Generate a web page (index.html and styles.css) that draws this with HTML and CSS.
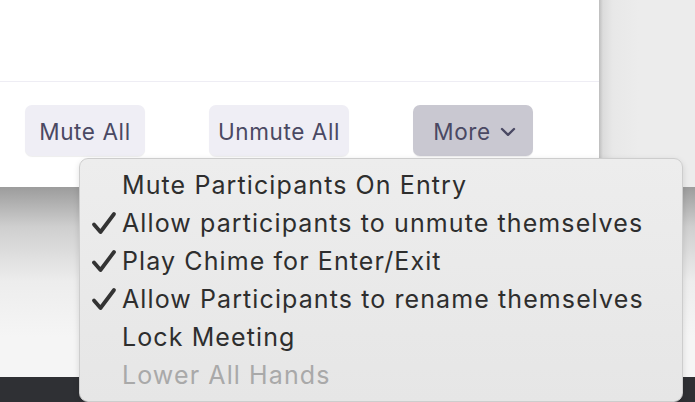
FILE: index.html
```html
<!DOCTYPE html>
<html lang="en">
<head>
    <meta charset="UTF-8">
    <meta name="viewport" content="width=device-width, initial-scale=1.0">
    <title>Participants</title>
    <link rel="stylesheet" href="styles.css">
</head>
<body>
    <div class="screen">
        <div class="top">
            <div class="panel">
                <div class="panel-head"></div>
                <div class="panel-actions">
                    <button class="btn btn-mute">Mute All</button>
                    <button class="btn btn-unmute">Unmute All</button>
                    <button class="btn btn-more">More
                        <svg class="chevron" width="16" height="10" viewBox="0 0 16 10">
                            <path d="M2 2 L8 7.8 L14 2" fill="none" stroke="#4a4963" stroke-width="2.4" stroke-linecap="round" stroke-linejoin="round"/>
                        </svg>
                    </button>
                </div>
            </div>
            <div class="gutter"></div>
        </div>
        <div class="backdrop"></div>
        <div class="taskbar"></div>

        <ul class="menu">
            <li class="menu-item">Mute Participants On Entry</li>
            <li class="menu-item checked">Allow participants to unmute themselves</li>
            <li class="menu-item checked">Play Chime for Enter/Exit</li>
            <li class="menu-item checked">Allow Participants to rename themselves</li>
            <li class="menu-item">Lock Meeting</li>
            <li class="menu-item disabled">Lower All Hands</li>
        </ul>
    </div>
</body>
</html>
```

FILE: styles.css
```css
body {
    margin: 0;
    font-family: Inter, "Noto Sans", sans-serif;
    background-color: #f2f2f2;
}

.screen {
    position: relative;
    width: 695px;
    height: 402px;
    overflow: hidden;
    display: flex;
    flex-direction: column;
}

.top {
    display: flex;
    height: 187px;
}

.panel {
    width: 599px;
    background-color: #fff;
    display: flex;
    flex-direction: column;
}

.panel-head {
    height: 81px;
    border-bottom: 1px solid #eeedf4;
}

.panel-actions {
    display: flex;
    gap: 64px;
    padding: 23px 0 0 25px;
}

.btn {
    height: 51px;
    border: none;
    border-radius: 7px;
    background-color: #efeef5;
    color: #4a4963;
    font-family: Inter, "Noto Sans", sans-serif;
    font-size: 22.5px;
    letter-spacing: 0.6px;
    padding: 2px 0 0;
    box-shadow: 0 1px 1px rgba(0, 0, 0, 0.07);
    display: flex;
    align-items: center;
    justify-content: center;
    gap: 9px;
}

.btn-mute {
    width: 120px;
}

.btn-unmute {
    width: 140px;
}

.btn-more {
    width: 120px;
    background-color: #c9c8d1;
    padding-left: 3px;
}

.chevron {
    margin-top: 1px;
}

.gutter {
    flex: 1;
    background: linear-gradient(to right, #bdbdbd 0, #dcdcdc 4px, #e8e8e8 14px, #ececec 40px);
}

.backdrop {
    height: 190px;
    background: linear-gradient(#9c9c9c 0, #cfcfcf 40px, #ededed 95px, #f5f5f5 150px);
}

.taskbar {
    flex: 1;
    background-color: #2f3034;
}

.menu {
    position: absolute;
    left: 79px;
    top: 158px;
    width: 602px;
    height: 235px;
    margin: 0;
    padding: 7px 0 0;
    list-style: none;
    background: linear-gradient(#ededed, #e6e6e6);
    border: 1px solid #cdcdcd;
    border-radius: 9px;
    box-shadow: 0 2px 6px rgba(0, 0, 0, 0.12);
}

.menu-item {
    position: relative;
    height: 38px;
    line-height: 38px;
    padding-left: 42px;
    font-size: 25px;
    letter-spacing: 1.1px;
    color: #2e2e2e;
    white-space: nowrap;
}

.menu-item.checked::before {
    content: "";
    position: absolute;
    left: 11px;
    top: 7px;
    width: 26px;
    height: 24px;
    background: url("data:image/svg+xml;utf8,<svg xmlns='http://www.w3.org/2000/svg' width='26' height='24' viewBox='0 0 26 24'><path d='M3 13.5 L9.5 21 L23 3' fill='none' stroke='%23333' stroke-width='3.8' stroke-linecap='round' stroke-linejoin='round'/></svg>") no-repeat;
}

.menu-item.disabled {
    color: #a9a9a9;
}
```
